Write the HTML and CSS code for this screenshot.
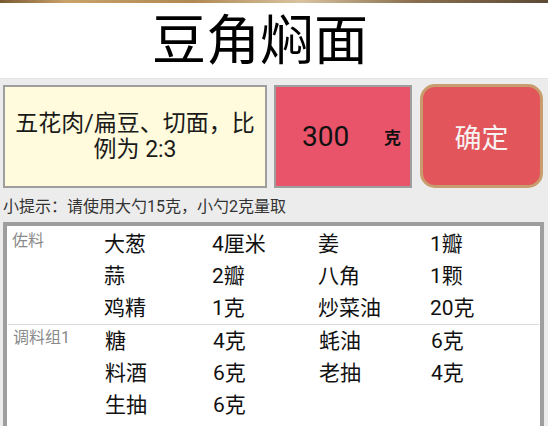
FILE: index.html
```html
<!DOCTYPE html>
<html lang="zh-CN">
    <head>
        <meta charset="utf-8">
        <title>豆角焖面</title>
        <meta name="viewport" content="width=device-width, initial-scale=1">
        <link rel="stylesheet" href="styles.css">
    </head>
    <body>
		<div class="photo-strip"></div>

		<header class="recipe-header">
			<h1 class="recipe-title">豆角焖面</h1>
		</header>

		<main class="app">
			<!-- Portion input -->
			<section class="portion">
				<div class="portion-note">五花肉/扁豆、切面，比例为 2:3</div>
				<div class="portion-amount">
					<span class="amount-value">300</span>
					<span class="amount-unit">克</span>
				</div>
				<button class="confirm-btn">确定</button>
			</section>

			<p class="hint">小提示：请使用大勺15克，小勺2克量取</p>

			<!-- Ingredient table -->
			<section class="ingredients">
				<div class="group">
					<div class="group-label">佐料</div>
					<div class="cell">大葱</div>
					<div class="cell">4厘米</div>
					<div class="cell">姜</div>
					<div class="cell">1瓣</div>
					<div class="cell">蒜</div>
					<div class="cell">2瓣</div>
					<div class="cell">八角</div>
					<div class="cell">1颗</div>
					<div class="cell">鸡精</div>
					<div class="cell">1克</div>
					<div class="cell">炒菜油</div>
					<div class="cell">20克</div>
				</div>
				<div class="group">
					<div class="group-label">调料组1</div>
					<div class="cell">糖</div>
					<div class="cell">4克</div>
					<div class="cell">蚝油</div>
					<div class="cell">6克</div>
					<div class="cell">料酒</div>
					<div class="cell">6克</div>
					<div class="cell">老抽</div>
					<div class="cell">4克</div>
					<div class="cell">生抽</div>
					<div class="cell">6克</div>
					<div class="cell"></div>
					<div class="cell"></div>
				</div>
			</section>
		</main>
    </body>
</html>
```

FILE: styles.css
```css
/* Reset */
*,
*::after,
*::before {
	margin: 0;
	padding: 0;
	box-sizing: border-box;
}

/* Base */
body {
	font-family: Roboto, "Noto Sans CJK SC", sans-serif;
	background: #ececec;
	color: #111;
	overflow: hidden;
}

/* Header */
.photo-strip {
	height: 3px;
	background: linear-gradient(90deg, #7a5a33 0%, #c9a26a 12%, #b08852 35%, #d8c3a0 55%, #8a7050 75%, #5d4a35 100%);
}
.recipe-header {
	height: 76px;
	background: #fff;
	border-bottom: 1px solid #e4e4e4;
	display: flex;
	justify-content: center;
	align-items: center;
	padding-right: 28px;
}
.recipe-title {
	font-size: 54px;
	font-weight: 400;
	line-height: 1;
	color: #000;
	margin-top: 2px;
}

/* Portion row */
.portion {
	display: flex;
	gap: 7px;
	padding: 0 3px;
	margin-top: 5px;
	height: 104px;
}
.portion-note {
	width: 264px;
	margin-top: 1px;
	background: #fffbdc;
	border: 2px solid #9e9e9e;
	display: flex;
	align-items: center;
	justify-content: center;
	text-align: center;
	padding: 0 10px;
	font-size: 23px;
	line-height: 26px;
	color: #1a1a1a;
}
.portion-amount {
	width: 138px;
	margin-top: 1px;
	background: #e9546a;
	border: 2px solid #9e9e9e;
	display: flex;
	align-items: center;
	padding-left: 26px;
}
.amount-value {
	font-size: 28px;
	width: 82px;
	color: #111;
}
.amount-unit {
	font-size: 17px;
	font-weight: 700;
}
.confirm-btn {
	flex: 1;
	margin-left: 1px;
	margin-right: 2px;
	background: #e2555b;
	border: 3px solid #c89c6c;
	border-radius: 15px;
	color: #f7f2f2;
	font-family: inherit;
	font-size: 27px;
}

/* Hint */
.hint {
	font-size: 16px;
	line-height: 24px;
	color: #333;
	padding-left: 3px;
	margin: 7px 0 3px;
}

/* Ingredient table */
.ingredients {
	margin: 0 4px 0 3px;
	background: #fff;
	border: 4px solid #9e9e9e;
	height: 220px;
}
.group {
	display: grid;
	grid-template-columns: 97px 108px 106px 112px 1fr;
	grid-auto-rows: 32px;
	padding-top: 2px;
}
.group + .group {
	border-top: 1px solid #dcdcdc;
	margin: 0 1px;
	padding-top: 0;
}
.group-label {
	grid-row: 1 / span 3;
	font-size: 16px;
	line-height: 26px;
	color: #8a8a8a;
	padding-left: 5px;
}
.cell {
	font-size: 21px;
	line-height: 32px;
	color: #111;
}
```
